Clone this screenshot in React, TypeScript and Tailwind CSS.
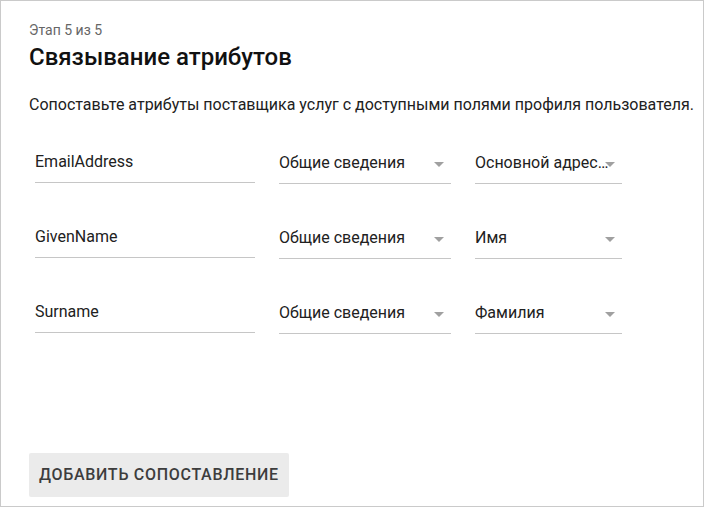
import React from "react";

type Row = { attr: string; group: string; field: string };

const rows: Row[] = [
  { attr: "EmailAddress", group: "Общие сведения", field: "Основной адрес электронной почты" },
  { attr: "GivenName", group: "Общие сведения", field: "Имя" },
  { attr: "Surname", group: "Общие сведения", field: "Фамилия" },
];

const Arrow = () => (
  <svg width="10" height="5" viewBox="0 0 10 5" className="shrink-0">
    <path d="M0 0 L10 0 L5 5 Z" fill="#a0a0a0" />
  </svg>
);

const SelectField = ({ value, width }: { value: string; width: string }) => (
  <div
    className={`relative flex items-center border-b border-[#c6c6c6] pt-[1px] pb-[10px] ${width}`}
  >
    <span className="block truncate pr-[12px] text-[16px] leading-5 text-[#212121]">
      {value}
    </span>
    <span className="absolute right-[7px] top-[10px]">
      <Arrow />
    </span>
  </div>
);

export default function App() {
  return (
    <div
      className="flex h-[507px] w-[704px] flex-col border border-[#cacaca] bg-white pt-[21px] pl-[28px] pb-[9px]"
      style={{ fontFamily: "Roboto, 'Liberation Sans', sans-serif" }}
    >
      <div className="text-[14px] leading-4 text-[#666666]">Этап 5 из 5</div>
      <h1 className="mt-[5px] text-[24px] font-medium leading-7 text-[#111111]">
        Связывание атрибутов
      </h1>
      <p className="mt-[24px] text-[16px] leading-5 text-[#212121]">
        Сопоставьте атрибуты поставщика услуг с доступными полями профиля пользователя.
      </p>

      <div className="mt-[37px] flex flex-col gap-[43px] pl-[6px]">
        {rows.map((r) => (
          <div key={r.attr} className="flex items-start gap-[24px]">
            <div className="w-[220px] border-b border-[#c6c6c6] pb-[10px] text-[16px] leading-5 text-[#212121]">
              {r.attr}
            </div>
            <SelectField value={r.group} width="w-[172px]" />
            <SelectField value={r.field} width="w-[147px]" />
          </div>
        ))}
      </div>

      <div className="mt-auto">
        <button className="h-[44px] rounded-[2px] bg-[#ebebeb] px-[10px] text-[16px] font-medium uppercase tracking-[0.7px] text-[#3d3d3d]">
          Добавить сопоставление
        </button>
      </div>
    </div>
  );
}
